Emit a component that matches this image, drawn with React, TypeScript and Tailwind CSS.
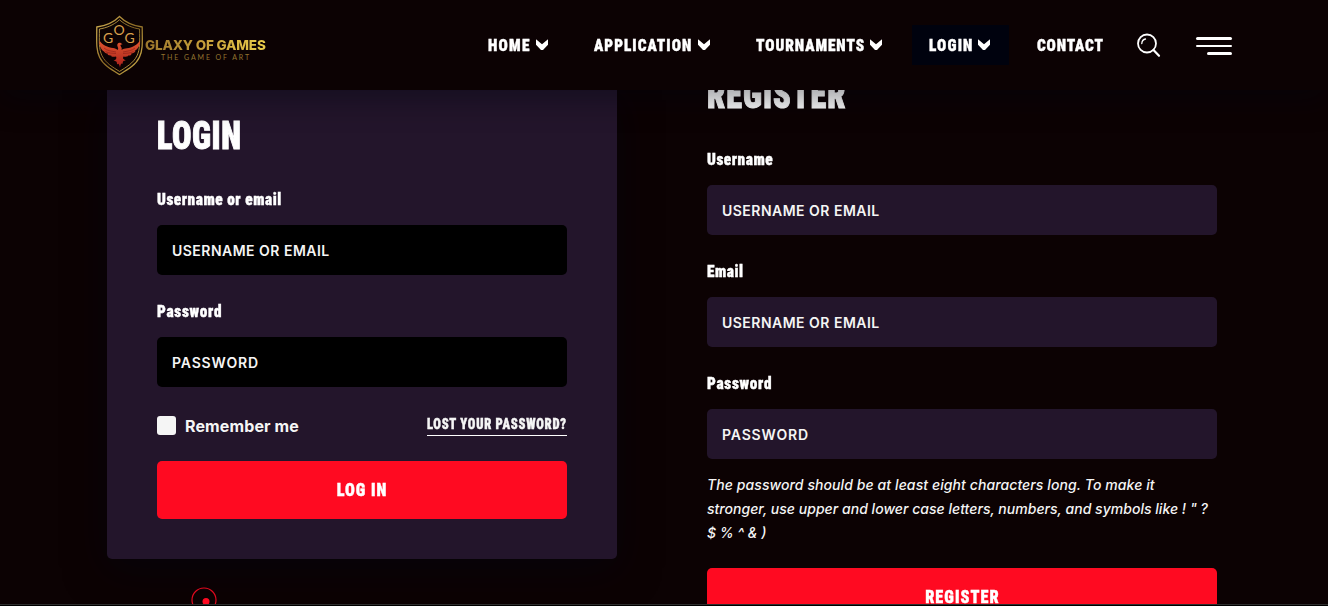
import React from "react";
import clsx from "clsx";

const display = "font-['Roboto',sans-serif] [font-stretch:75%] font-black whitespace-nowrap [-webkit-text-stroke:0.4px_currentColor]";
const body = "font-['Inter',sans-serif]";

function Logo() {
  return (
    <div className="flex h-[60px] w-[176px] items-center">
      <svg width="50" height="62" viewBox="0 0 50 62" className="mt-[2px] shrink-0" fill="none">
        <defs>
          <linearGradient id="gold" x1="0" y1="0" x2="1" y2="1">
            <stop offset="0" stopColor="#d5b455" />
            <stop offset="0.5" stopColor="#8d6b25" />
            <stop offset="1" stopColor="#d8b950" />
          </linearGradient>
          <linearGradient id="fire" x1="0" y1="0" x2="0" y2="1">
            <stop offset="0" stopColor="#e0562f" />
            <stop offset="1" stopColor="#a81f1b" />
          </linearGradient>
        </defs>
        <path d="M24.5 1.5C18 8 10 11 1.8 12C1.8 26 .8 34 4.5 42C8 50 17 55 24.5 59.5C32 55 41 50 44.5 42C48.2 34 47.2 26 47.2 12C39 11 31 8 24.5 1.5Z" stroke="url(#gold)" strokeWidth="1.3" />
        <path d="M24.5 4.8C18 10.5 11 13 4.4 14C4.4 27 3.6 33.5 7 40.8C10.5 48 18 52.4 24.5 56.4C31 52.4 38.5 48 42 40.8C45.4 33.5 44.6 27 44.6 14C38 13 31 10.5 24.5 4.8Z" stroke="url(#gold)" strokeWidth="0.9" />
        <g className="font-['Lato',sans-serif]" fill="#d9a04c" fontSize="14" textAnchor="middle">
          <text x="13" y="27.5">G</text>
          <text x="24" y="20">O</text>
          <text x="34.5" y="27.5">G</text>
        </g>
        <path d="M4.5 25.5C7 30 13 32.5 18 33C20 33.2 21.5 34 22.5 35C24.5 33 21.5 31.5 22.5 29C23.5 27.2 26 27.5 27.5 29.5C25.5 29.4 25 30 25.8 31.3C27 33 26.8 34 26.5 35C28 33.7 30 33.5 32 33.3C37 32.5 42.5 30 45 25.5C45.5 30 43 34 39.5 36C40.5 36.2 40.5 36.5 40 37C38 38.5 37 38.5 36 38.7C37 39.3 36 40.5 33 40.6C34 41.5 31 42 28.5 41.5C27.5 43.5 28 44 31 45.5C28.5 45.5 27.5 46 27.8 49C26.5 48 25.8 48.5 25 52.5C24 48.5 23.3 48 22 49.5C22.3 46.5 21 45.5 18.5 46C21 44.5 22 43.5 21 41.5C18 42 15.5 41.5 16.5 40.7C13 40.5 12 39.5 13 38.8C11 38.5 9.5 37.8 9 36.5C5.5 34.5 4 30 4.5 25.5Z" fill="url(#fire)" />
        <path d="M9 33C12 36 17 36 21 37M10.5 36.5C14 38.5 17 38 21 38.5M40 33C37 36 32 36 28 37M38.5 36.5C35 38.5 32 38 28 38.5" stroke="#7a1714" strokeWidth="0.5" />
      </svg>
      <div className="flex h-[60px] flex-col pt-[23px]">
        <span className="bg-gradient-to-r from-[#9b762c] via-[#c9a23b] to-[#e8cc4a] bg-clip-text font-['Inter',sans-serif] text-[13.5px] leading-[14px] font-extrabold tracking-[-0.15px] whitespace-nowrap text-transparent">GLAXY OF GAMES</span>
        <span className="pl-[16px] font-['Lato',sans-serif] text-[7px] leading-[10px] tracking-[1.9px] whitespace-nowrap text-[#92732f]">THE GAME OF ART</span>
      </div>
    </div>
  );
}

function Chevron() {
  return (
    <svg width="13" height="12" viewBox="0 0 13 12" className="shrink-0" fill="#fff">
      <path d="M0 .2L6 5.2L12 .2V5.8L7 11H5L0 5.800Z" />
    </svg>
  );
}

const links = [
  { label: "HOME", width: "w-[106px]", text: "w-[42px] tracking-[1.4px]", menu: true },
  { label: "APPLICATION", width: "w-[162px]", text: "w-[98px] tracking-[1.15px]", menu: true },
  { label: "TOURNAMENTS", width: "w-[156px]", text: "w-[108px] tracking-[1.05px]", menu: true },
  { label: "LOGIN", width: "w-[97px] ml-[17px] bg-[#00020e]", text: "w-[43px] tracking-[1.3px]", menu: true },
  { label: "CONTACT", width: "w-[100px] ml-[11px]", text: "w-[66px] tracking-[0.95px]" },
];

function Header() {
  return (
    <header className="relative z-10 flex h-[90px] shrink-0 items-center bg-[#0c0203] pl-[95px] shadow-[0_10px_30px_rgba(2,5,16,0.4)]">
      <Logo />
      <nav className="ml-[200px] flex items-center">
        {links.map((l) => (
          <a key={l.label} className={clsx(display, "flex h-[40px] items-center gap-[6px] pl-[17px] text-[17px] text-white", l.width)}>
            <span className={clsx("shrink-0 origin-left scale-x-90 pt-[2px]", l.text)}>{l.label}</span>
            {l.menu && <Chevron />}
          </a>
        ))}
      </nav>
      <svg width="26" height="26" viewBox="0 0 26 26" className="mt-[1px] ml-[16px]" fill="none" stroke="#fff" strokeLinecap="round">
        <circle cx="11" cy="10.5" r="9" strokeWidth="1.8" />
        <path d="M17.5 17L23 22.8" strokeWidth="2.2" />
        <path d="M5.8 10.5C6 8 7.5 6.3 9.5 6" strokeWidth="1.3" />
      </svg>
      <div className="mt-[2px] ml-[34px] flex w-[36px] flex-col items-end gap-[5px]">
        <i className="h-[2.5px] w-full rounded bg-white" />
        <i className="h-[2.5px] w-full rounded bg-white" />
        <i className="h-[2.5px] w-[25px] rounded bg-white" />
      </div>
    </header>
  );
}

function Title({ children, className }: { children: string; className: string }) {
  return (
    <h1 className={clsx(display, "h-[50px] origin-left scale-x-85 text-[38px] leading-[50px] text-white [-webkit-text-stroke:1px_currentColor]", className)}>{children}</h1>
  );
}

function Field({ label, placeholder, dark, className }: { label: string; placeholder: string; dark?: boolean; className?: string }) {
  return (
    <label className={clsx("flex flex-col gap-4", className)}>
      <span
        className={clsx(
          display,
          "h-5 origin-left scale-x-90 text-[17px] leading-[21px] text-white",
          label === "Password" ? "tracking-[0.8px]" : "tracking-[0.6px]"
        )}
      >
        {label}
      </span>
      <input
        placeholder={placeholder}
        className={clsx(
          body,
          "h-[50px] w-full rounded-[5px] px-[15px] pt-px text-[14px] font-semibold text-white outline-none placeholder:text-[#f5f5f5]",
          placeholder === "PASSWORD" ? "tracking-[0.85px]" : "tracking-[0.48px]",
          dark ? "bg-black" : "bg-[#23152b]"
        )}
      />
    </label>
  );
}

function Submit({ children, className }: { children: string; className: string }) {
  return (
    <button className={clsx(display, "h-[58px] w-full rounded-[5px] bg-[#ff0a21] pb-[2px] text-[18px] text-white", className)}>
      <span className="inline-block scale-x-90">{children}</span>
    </button>
  );
}

export default function App() {
  return (
    <div className="flex h-[606px] w-[1328px] flex-col overflow-hidden bg-black">
      <div className="flex h-[604px] shrink-0 flex-col overflow-hidden bg-[#0c0203]">
        <Header />
        <main className="flex items-start pl-[107px]">
          <section className="relative h-[469px] w-[510px] rounded-b-[5px] bg-[#23152b] px-[50px] pt-[21px] shadow-[0_10px_40px_rgba(2,5,16,0.5)]">
            <Title className="tracking-[0.6px]">LOGIN</Title>
            <Field className="mt-[28px]" label="Username or email" placeholder="USERNAME OR EMAIL" dark />
            <Field className="mt-[26px]" label="Password" placeholder="PASSWORD" dark />
            <div className="mt-[28px] flex h-[21px] items-center justify-between">
              <label className="flex items-center gap-[9px]">
                <span className="size-[19px] rounded-[3px] bg-[#f5f5f5]" />
                <span className={clsx(body, "text-[16px] leading-[20px] font-bold tracking-[0.12px] text-[#f5f5f5]")}>Remember me</span>
              </label>
              <a className="h-[21px] w-[140px] border-b border-white">
                <span className={clsx(display, "block origin-left scale-x-90 text-[14px] leading-[19px] tracking-[0.8px] text-[#f5f5f5]")}>LOST YOUR PASSWORD?</span>
              </a>
            </div>
            <Submit className="mt-[25px] tracking-[1.05px]">LOG IN</Submit>
            <svg width="26" height="26" viewBox="0 0 26 26" className="absolute top-[496.5px] left-[83.5px]" fill="none">
              <circle cx="13" cy="13" r="12" stroke="#e0091e" strokeWidth="1.2" />
              <circle cx="15" cy="14.5" r="3.5" fill="#ff0a21" />
            </svg>
          </section>
          <section className="-mt-[20px] ml-[90px] w-[510px]">
            <Title className="tracking-[1.1px]">REGISTER</Title>
            <Field className="mt-[29px]" label="Username" placeholder="USERNAME OR EMAIL" />
            <Field className="mt-[26px]" label="Email" placeholder="USERNAME OR EMAIL" />
            <Field className="mt-[26px]" label="Password" placeholder="PASSWORD" />
            <p className={clsx(body, "mt-[14px] text-[14px] leading-[24px] font-medium whitespace-nowrap text-[#f5f5f5] italic")}>
              <span className="tracking-[0.09px]">The password should be at least eight characters long. To make it</span>
              <br />
              <span className="tracking-[0.03px]">stronger, use upper and lower case letters, numbers, and symbols like ! " ?</span>
              <br />$ % ^ &amp; )
            </p>
            <Submit className="mt-[23px] tracking-[1.15px]">REGISTER</Submit>
          </section>
        </main>
      </div>
      <div className="h-px shrink-0 bg-[#2e2e2e]" />
    </div>
  );
}
